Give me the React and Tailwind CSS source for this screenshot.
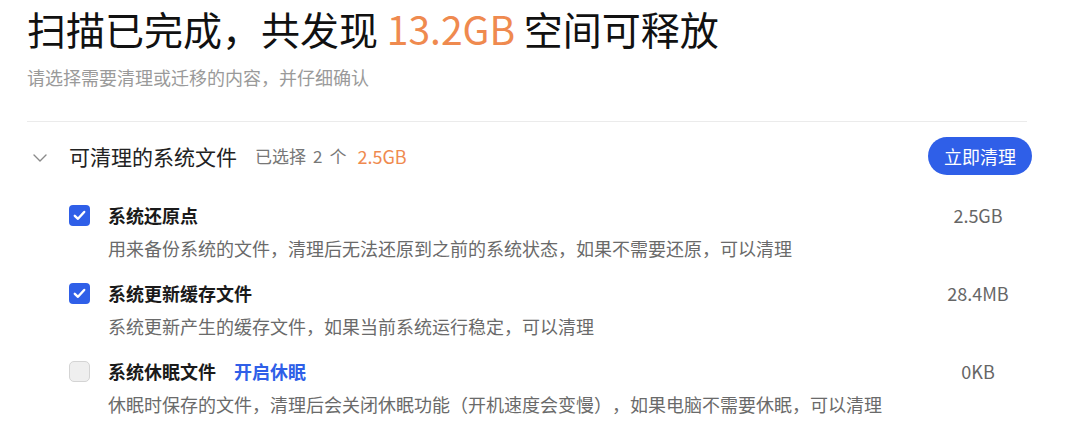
import React from "react";

const items = [
  {
    title: "系统还原点",
    desc: "用来备份系统的文件，清理后无法还原到之前的系统状态，如果不需要还原，可以清理",
    size: "2.5GB",
    checked: true,
  },
  {
    title: "系统更新缓存文件",
    desc: "系统更新产生的缓存文件，如果当前系统运行稳定，可以清理",
    size: "28.4MB",
    checked: true,
  },
  {
    title: "系统休眠文件",
    link: "开启休眠",
    desc: "休眠时保存的文件，清理后会关闭休眠功能（开机速度会变慢），如果电脑不需要休眠，可以清理",
    size: "0KB",
    checked: false,
  },
];

function Checkbox({ checked }) {
  if (checked) {
    return (
      <div className="w-[21px] h-[21px] rounded-[4px] bg-[#2f5fe8] flex items-center justify-center shrink-0">
        <svg width="13" height="11" viewBox="0 0 13 11" fill="none">
          <path d="M1.8 5.8 L5 8.8 L11.2 2" stroke="white" strokeWidth="2.4" strokeLinecap="round" strokeLinejoin="round" />
        </svg>
      </div>
    );
  }
  return <div className="w-[21px] h-[21px] rounded-[5px] bg-[#efefef] border border-[#d4d4d4] shrink-0" />;
}

export default function App() {
  return (
    <div
      className="w-[1072px] h-[429px] bg-white overflow-hidden pl-[27px] pt-[4px] [text-spacing-trim:space-all]"
      style={{ fontFamily: '"Noto Sans CJK SC", "Noto Sans", sans-serif' }}
    >
      <h1 className="text-[39px] leading-[48px] text-[#111] font-normal whitespace-nowrap">
        扫描已完成，共发现 <span className="text-[#ef8a4f]">13.2GB</span> 空间可释放
      </h1>
      <p className="mt-[13px] text-[18px] leading-[24px] text-[#9a9a9a]">请选择需要清理或迁移的内容，并仔细确认</p>
      <div className="mt-[32px] w-[1000px] h-px bg-[#ebebeb]" />
      <div className="mt-[15px] w-[1005px] flex items-center h-[38px]">
        <div className="w-[42px] flex items-center pl-[6px] pt-[3px]">
          <svg width="14" height="8" viewBox="0 0 14 8" fill="none">
            <path d="M1 1 L7 7 L13 1" stroke="#8a8a8a" strokeWidth="1.4" strokeLinecap="round" strokeLinejoin="round" />
          </svg>
        </div>
        <span className="text-[21px] leading-[28px] text-[#222]">可清理的系统文件</span>
        <span className="ml-[18px] text-[17px] leading-[24px] text-[#777]">已选择</span>
        <span className="ml-[7px] text-[17px] leading-[24px] text-[#777]">2</span>
        <span className="ml-[7px] text-[17px] leading-[24px] text-[#777]">个</span>
        <span className="ml-[11px] text-[18px] leading-[24px] text-[#ef8a4f]">2.5GB</span>
        <button className="ml-auto h-[38px] w-[104px] rounded-full bg-[#2f5fe8] text-white text-[18px] leading-[24px]">
          立即清理
        </button>
      </div>
      <div className="mt-[28px] pl-[42px] w-[1001px] flex flex-col gap-[21px]">
        {items.map((it, i) => (
          <div key={i} className="flex">
            <div className="flex-1">
              <div className="flex items-center h-[24px]">
                <Checkbox checked={it.checked} />
                <span className="ml-[18px] text-[18px] leading-[24px] font-bold text-[#1a1a1a]">{it.title}</span>
                {it.link && (
                  <span className="ml-[18px] text-[18px] leading-[24px] font-bold text-[#2f5fe8]">{it.link}</span>
                )}
              </div>
              <p className="mt-[9px] ml-[39px] text-[18px] leading-[24px] text-[#6a6a6a] whitespace-nowrap">{it.desc}</p>
            </div>
            <div className="w-[100px] text-center text-[18px] leading-[24px] text-[#666]">{it.size}</div>
          </div>
        ))}
      </div>
    </div>
  );
}
